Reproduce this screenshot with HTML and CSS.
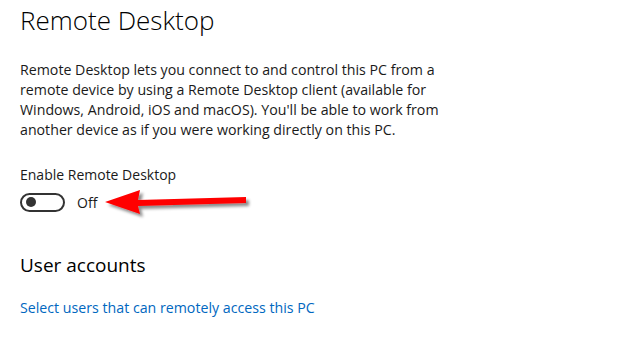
FILE: index.html
```html
<!DOCTYPE html>
<html lang="en">
<head>
    <meta charset="UTF-8">
    <title>Remote Desktop</title>
    <link rel="stylesheet" href="styles.css">
</head>
<body>
    <div class="page">
        <h1>Remote Desktop</h1>
        <p class="intro">Remote Desktop lets you connect to and control this PC from a<br>remote device by using a Remote Desktop client (available for<br>Windows, Android, iOS and macOS). You'll be able to work from<br>another device as if you were working directly on this PC.</p>

        <div class="setting">
            <div class="label">Enable Remote Desktop</div>
            <div class="toggle-row">
                <span class="toggle"><span class="knob"></span></span>
                <span class="state">Off</span>
                <svg class="arrow" width="156" height="36" viewBox="0 0 156 36">
                    <defs>
                        <filter id="shadow" x="-10%" y="-30%" width="130%" height="180%">
                            <feDropShadow dx="3" dy="3" stdDeviation="1.6" flood-color="#000" flood-opacity="0.45"/>
                        </filter>
                    </defs>
                    <polygon points="4,15 39,3 37,13 145,10 145,16 37,19 39,27" fill="#ff0000" filter="url(#shadow)"/>
                </svg>
            </div>
        </div>

        <h2>User accounts</h2>
        <a class="link" href="#">Select users that can remotely access this PC</a>
    </div>
</body>
</html>
```

FILE: styles.css
```css
body {
    margin: 0;
    background: #fff;
    color: #000;
    font-family: "Open Sans", "Noto Sans", sans-serif;
}
.page {
    padding: 0 20px;
}
h1 {
    margin: 0;
    padding-top: 2px;
    font-size: 26px;
    font-weight: 300;
    line-height: 36px;
    color: #000;
}
.intro {
    margin: 22px 0 0;
    font-size: 14.2px;
    line-height: 20px;
    color: #1a1a1a;
}
.setting {
    margin-top: 25px;
}
.label {
    font-size: 14px;
    line-height: 20px;
    color: #1a1a1a;
}
.toggle-row {
    display: flex;
    align-items: center;
    margin-top: 4px;
    height: 26px;
}
.toggle {
    display: flex;
    align-items: center;
    box-sizing: border-box;
    width: 45px;
    height: 19px;
    border: 2px solid #333;
    border-radius: 10px;
    padding-left: 4px;
}
.knob {
    width: 10px;
    height: 10px;
    border-radius: 50%;
    background: #333;
}
.state {
    margin-left: 12px;
    font-size: 14px;
    color: #1a1a1a;
}
.arrow {
    margin-left: 4px;
    margin-top: 6px;
}
h2 {
    margin: 36px 0 0;
    font-size: 19px;
    font-weight: 400;
    line-height: 28px;
}
.link {
    display: inline-block;
    margin-top: 19px;
    font-size: 14.2px;
    color: #0067c0;
    text-decoration: none;
}
```
